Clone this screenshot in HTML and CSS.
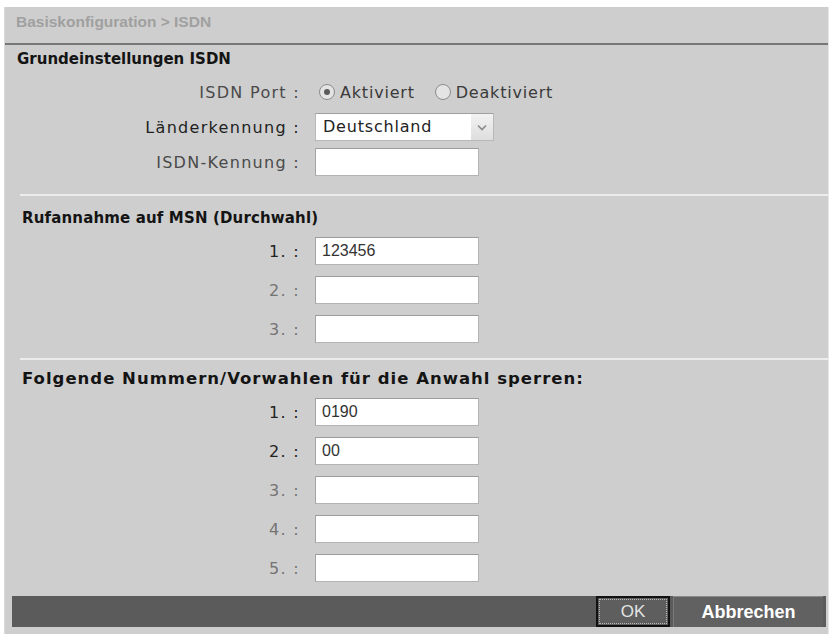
FILE: index.html
```html
<!DOCTYPE html>
<html lang="de">
<head>
    <meta charset="UTF-8">
    <title>Basiskonfiguration - ISDN</title>
    <link rel="stylesheet" href="styles.css">
</head>
<body>
    <div class="panel">
        <div class="crumb">Basiskonfiguration &gt; ISDN</div>

        <h3 class="head head-first">Grundeinstellungen ISDN</h3>
        <div class="rows rows-basic">
            <div class="row">
                <span class="label mid">ISDN Port :</span>
                <div class="radios">
                    <span class="radio on"></span><span class="radio-text">Aktiviert</span>
                    <span class="radio"></span><span class="radio-text">Deaktiviert</span>
                </div>
            </div>
            <div class="row">
                <span class="label filled">Länderkennung :</span>
                <div class="select">
                    <span class="select-value">Deutschland</span>
                    <span class="select-arrow">
                        <svg width="10" height="7" viewBox="0 0 10 7"><path d="M1 1.5 L5 5.5 L9 1.5" fill="none" stroke="#8a8a8a" stroke-width="1.6"/></svg>
                    </span>
                </div>
            </div>
            <div class="row">
                <span class="label mid">ISDN-Kennung :</span>
                <input class="field" type="text" value="">
            </div>
        </div>

        <hr class="sep sep-one">

        <h3 class="head head-msn">Rufannahme auf MSN (Durchwahl)</h3>
        <div class="rows rows-list" id="msnRows"></div>

        <hr class="sep sep-two">

        <h3 class="head head-block">Folgende Nummern/Vorwahlen für die Anwahl sperren:</h3>
        <div class="rows rows-list" id="blockRows"></div>

        <div class="footer">
            <button type="button" class="btn btn-ok">OK</button>
            <button type="button" class="btn btn-cancel">Abbrechen</button>
        </div>
    </div>

    <script>
        const msn = ["123456", "", ""];
        const blocked = ["0190", "00", "", "", ""];

        function fillRows(id, values) {
            const box = document.getElementById(id);
            values.forEach((val, i) => {
                const row = document.createElement("div");
                row.className = "row";
                row.innerHTML = `<span class="label${val ? " filled" : ""}">${i + 1}. :</span>` +
                    `<input class="field num" type="text" value="${val}">`;
                box.appendChild(row);
            });
        }

        fillRows("msnRows", msn);
        fillRows("blockRows", blocked);
    </script>
</body>
</html>
```

FILE: styles.css
```css
* { box-sizing: border-box; }
body { margin: 0; background: #fff; font-family: "DejaVu Sans", sans-serif; }

.panel { margin: 7px 0 0 4px; width: 825px; height: 627px; background: #cecece; border-left: 1px solid #dadada; border-right: 1px solid #e6e6e6; display: flex; flex-direction: column; }

.crumb { height: 38px; padding: 6px 0 0 11px; font: bold 15.5px "Liberation Sans", sans-serif; color: #a0a0a0; border-bottom: 2px solid #777; }

.head { margin: 0; font-size: 15px; font-weight: bold; line-height: 18px; color: #141414; }
.head-first { margin-top: 5px; padding-left: 12px; }
.head-msn { margin-top: 13px; padding-left: 17px; letter-spacing: 0.15px; }
.head-block { margin-top: 10px; padding-left: 17px; font-size: 16.5px; letter-spacing: 1px; }

.rows { display: flex; flex-direction: column; }
.rows-basic { margin-top: 10px; gap: 7px; }
.rows-list { margin-top: 10px; gap: 11px; }

.row { display: grid; grid-template-columns: 295px 1fr; column-gap: 15px; align-items: center; height: 28px; }
.label { text-align: right; font-size: 16px; letter-spacing: 1.3px; color: #747474; }
.label.mid { color: #4a4a4a; }
.label.filled { color: #222; }

.radios { display: flex; align-items: center; padding-left: 4px; font-size: 16px; letter-spacing: 0.8px; color: #3a3a3a; }
.radio { width: 16px; height: 16px; border-radius: 50%; border: 1px solid #8c8c8c; background: #e4e4e4; display: flex; align-items: center; justify-content: center; }
.radio.on::after { content: ""; width: 6px; height: 6px; border-radius: 50%; background: #5a5a5a; }
.radio-text { margin: 0 20px 0 5px; }

.select { display: flex; width: 179px; height: 28px; border: 1px solid #b8b8b8; border-top-color: #a0a0a0; background: #fff; }
.select-value { flex: 1; padding-left: 7px; line-height: 26px; font-size: 16px; letter-spacing: 0.8px; color: #222; }
.select-arrow { width: 22px; display: flex; align-items: center; justify-content: center; background: linear-gradient(#f2f2f2, #dedede); }

.field { width: 164px; height: 28px; margin: 0; padding: 0 6px; border: 1px solid #b4b4b4; border-top-color: #9c9c9c; border-left-color: #a4a4a4; background: #fff; outline: none; }
.field.num { font: 16px "Liberation Sans", sans-serif; color: #333; }

.sep { margin: 0 0 0 15px; height: 2px; border: none; background: #ececec; }
.sep-one { margin-top: 18px; }
.sep-two { margin-top: 15px; }

.footer { margin: 14px 2px 0 7px; height: 31px; background: #5b5b5b; display: flex; justify-content: flex-end; }
.btn { height: 31px; margin: 0; border: none; cursor: pointer; font-family: "Liberation Sans", sans-serif; }
.btn-ok { width: 74px; margin-right: 3px; background: #5e5e5e; border: 2px solid #111; outline: 1px dotted #b8b8b8; outline-offset: -4px; color: #e4e4e4; font-size: 17px; }
.btn-cancel { width: 150px; margin-right: 3px; background: #616161; border-top: 1px solid #8a8a8a; border-left: 1px solid #7a7a7a; color: #fff; font-size: 18px; font-weight: bold; }
.btn:hover { background: #6a6a6a; }
```
